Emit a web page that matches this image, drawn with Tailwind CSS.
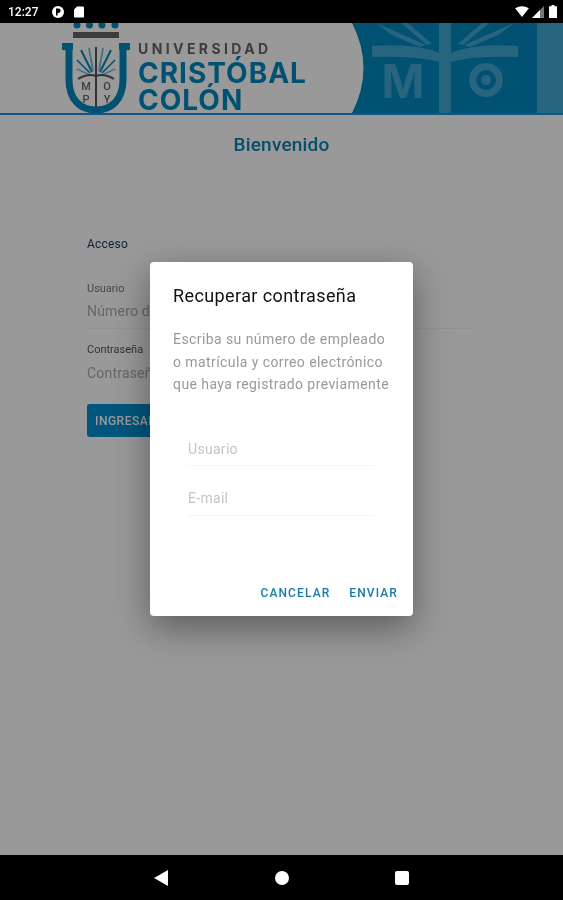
<!DOCTYPE html>
<html lang="es">
<head>
    <meta charset="UTF-8">
    <meta name="viewport" content="width=device-width, initial-scale=1.0">
    <title>Recuperar contraseña</title>
    <script src="https://cdn.jsdelivr.net/npm/@tailwindcss/browser@4"></script>
</head>
<body class="bg-black font-['Roboto',sans-serif]">
    <div class="w-[563px] h-[900px] flex flex-col overflow-hidden blur-[0.5px]">
        <!-- status bar -->
        <div class="h-[23px] shrink-0 bg-black flex items-center pl-[8px] pr-[6px] text-white">
            <span class="text-[12px] font-medium w-[43px]">12:27</span>
            <svg class="w-[14px] h-[14px]" viewBox="0 0 14 14"><circle cx="7" cy="7" r="6" fill="#fff"/><path d="M5 3.5v7h1.6V8h1.2a2.3 2.3 0 0 0 0-4.5z" fill="#000"/></svg>
            <svg class="w-[10px] h-[12px] ml-[9px]" viewBox="0 0 10 12"><path d="M3 .5h6a1 1 0 0 1 1 1v9a1 1 0 0 1-1 1H1a1 1 0 0 1-1-1V3.5z" fill="#fff"/></svg>
            <svg class="w-[14px] h-[11px] ml-auto" viewBox="0 0 15 12"><path d="M0 2.500Q7.500-2 15 2.500L7.500 12z" fill="#fff"/></svg>
            <svg class="w-[12px] h-[12px] ml-[3px]" viewBox="0 0 12 12"><path d="M12 0v12H0z" fill="#777"/><path d="M8 4v8H0z" fill="#fff"/></svg>
            <svg class="w-[8px] h-[13px] ml-[5px]" viewBox="0 0 8 13"><path d="M2.500 0h3v1.200H8V13H0V1.200h2.500z" fill="#fff"/></svg>
        </div>

        <div class="relative flex-1 bg-white">
            <!-- banner -->
            <header class="h-[92px] flex border-b-2 border-[#1b8fe0] pl-[62px]">
                <svg class="w-[68px] h-[90px] shrink-0" viewBox="62 23 68 90">
                    <g fill="#0288c0"><circle cx="77" cy="25" r="3.500"/><circle cx="89.500" cy="25" r="3.500"/><circle cx="102" cy="25" r="3.500"/><circle cx="115" cy="25" r="3.500"/></g>
                    <rect x="73" y="32" width="46" height="6" fill="#666"/>
                    <path d="M62 46.500h11M119 46.500h11M69 46v34c0 19 11 30 27 30s27-11 27-30V46" fill="none" stroke="#0288c0" stroke-width="7"/>
                    <path d="M96 47v60" stroke="#555" stroke-width="2"/>
                    <g stroke="#0288c0" stroke-width="2" fill="none"><path d="M81 50l11 22M111 50l-11 22"/><path d="M89 48l4 23M103 48l-4 23" stroke="#7cc3e2"/><path d="M77 60l13 13M115 60l-13 13" stroke-width="1.500"/><path d="M77 69l13 6M115 69l-13 6" stroke-width="1.500" stroke="#7cc3e2"/></g>
                    <path d="M78 79q10-6 18-3q8-3 18 3" fill="none" stroke="#555" stroke-width="2"/>
                    <g fill="#666" font-family="Roboto" font-size="11" font-weight="500" text-anchor="middle"><text x="86" y="90">M</text><text x="107" y="90">O</text><text x="86" y="103">P</text><text x="107" y="103">Y</text></g>
                </svg>
                <div class="ml-[8px] font-['Inter',sans-serif] font-bold">
                    <div class="mt-[18px] text-[14px] leading-[16px] font-bold tracking-[3.400px] text-[#666]">UNIVERSIDAD</div>
                    <div class="mt-[3px] text-[28px] leading-[27px] tracking-[1px] text-[#0288c0]">CRISTÓBAL</div>
                    <div class="text-[28px] leading-[27px] tracking-[1px] text-[#0288c0]">COLÓN</div>
                </div>
                <svg class="w-[211px] h-[90px] ml-auto shrink-0" viewBox="352 23 211 90">
                    <path d="M352 23Q375 68 352 113H563V23z" fill="#0288c0"/>
                    <rect x="537" y="23" width="26" height="90" fill="#42a8d4"/>
                    <g fill="#42a8d4">
                        <path d="M439 113V62Q420 56 372 57V46Q415 43 439 53V23H451V53Q475 43 518 46V57Q470 56 451 62V113z"/>
                        <path d="M376 23L426 45 420 47 392 35ZM514 23L464 45 470 47 498 35ZM408 23L432 44 427 45 401 23ZM482 23L458 44 463 45 489 23Z"/>
                        <circle cx="486" cy="80" r="17"/>
                    </g>
                    <circle cx="486" cy="80" r="10" fill="#0288c0"/><circle cx="486" cy="80" r="5" fill="#42a8d4"/>
                    <text x="403" y="98" fill="#42a8d4" font-family="Inter" font-size="46" font-weight="700" text-anchor="middle">M</text>
                </svg>
            </header>

            <!-- login form behind the dialog -->
            <main class="px-[87px] pb-10">
                <h1 class="mt-[19px] text-center text-[19px] leading-[22px] font-medium tracking-[0.200px] text-[#0a80b8]">Bienvenido</h1>
                <h2 class="mt-[80px] text-[12px] leading-[16px] font-normal tracking-[0.200px] text-[#10365c]">Acceso</h2>
                <div class="mt-[30px] border-b border-[#f4f4f4] pb-[8px]">
                    <div class="text-[11px] leading-[14px] text-[#777]">Usuario</div>
                    <div class="mt-[6px] text-[14px] leading-[18px] tracking-[0.200px] text-[#aaa]">Número de empleado</div>
                </div>
                <div class="mt-[14px]">
                    <div class="text-[11px] leading-[14px] text-[#555]">Contraseña</div>
                    <div class="mt-[7px] text-[14px] leading-[18px] tracking-[0.200px] text-[#aaa]">Contraseña</div>
                </div>
                <button class="mt-[22px] h-[33px] w-[100px] rounded-[3px] bg-[#0290d0] pl-[8px] text-left text-[12px] font-medium tracking-[0.500px] text-white">INGRESAR</button>
            </main>

            <!-- scrim + dialog -->
            <div class="absolute inset-0 bg-black/40 flex items-center justify-center">
                <div class="w-[263px] h-[354px] rounded-[4px] bg-white shadow-[0_12px_36px_rgba(0,0,0,0.4)] flex flex-col px-[23px] pt-[23px]">
                    <h2 class="text-[18px] leading-[22px] tracking-[0.400px] text-[#111]">Recuperar contraseña</h2>
                    <p class="mt-[21px] text-[14px] leading-[22.500px] tracking-[0.420px] whitespace-nowrap text-[#999]">Escriba su número de empleado<br>o matrícula y correo electrónico<br>que haya registrado previamente</p>
                    <div class="mt-[44px] mx-[15px] border-b border-[#f6f6f6] pb-[7px] text-[14px] leading-[18px] tracking-[0.300px] text-[#c4c4c4]">Usuario</div>
                    <div class="mt-[23px] mx-[15px] border-b border-[#f6f6f6] pb-[8px] text-[14px] leading-[18px] tracking-[0.300px] text-[#c4c4c4]">E-mail</div>
                    <div class="mt-auto mb-[15px] -mr-[8px] flex justify-end gap-[19px] text-[12px] leading-[16px] font-medium tracking-[1.100px] text-[#1a7aa8]">
                        <span>CANCELAR</span>
                        <span>ENVIAR</span>
                    </div>
                </div>
            </div>
        </div>

        <!-- nav bar -->
        <div class="h-[45px] shrink-0 bg-black flex items-center justify-between pl-[154px] pr-[154px]">
            <svg class="w-[14px] h-[16px]" viewBox="0 0 14 16"><path d="M14 0v16L0 8z" fill="#fff"/></svg>
            <div class="w-[14px] h-[14px] rounded-full bg-white"></div>
            <div class="w-[14px] h-[14px] rounded-[2px] bg-white"></div>
        </div>
    </div>
</body>
</html>
